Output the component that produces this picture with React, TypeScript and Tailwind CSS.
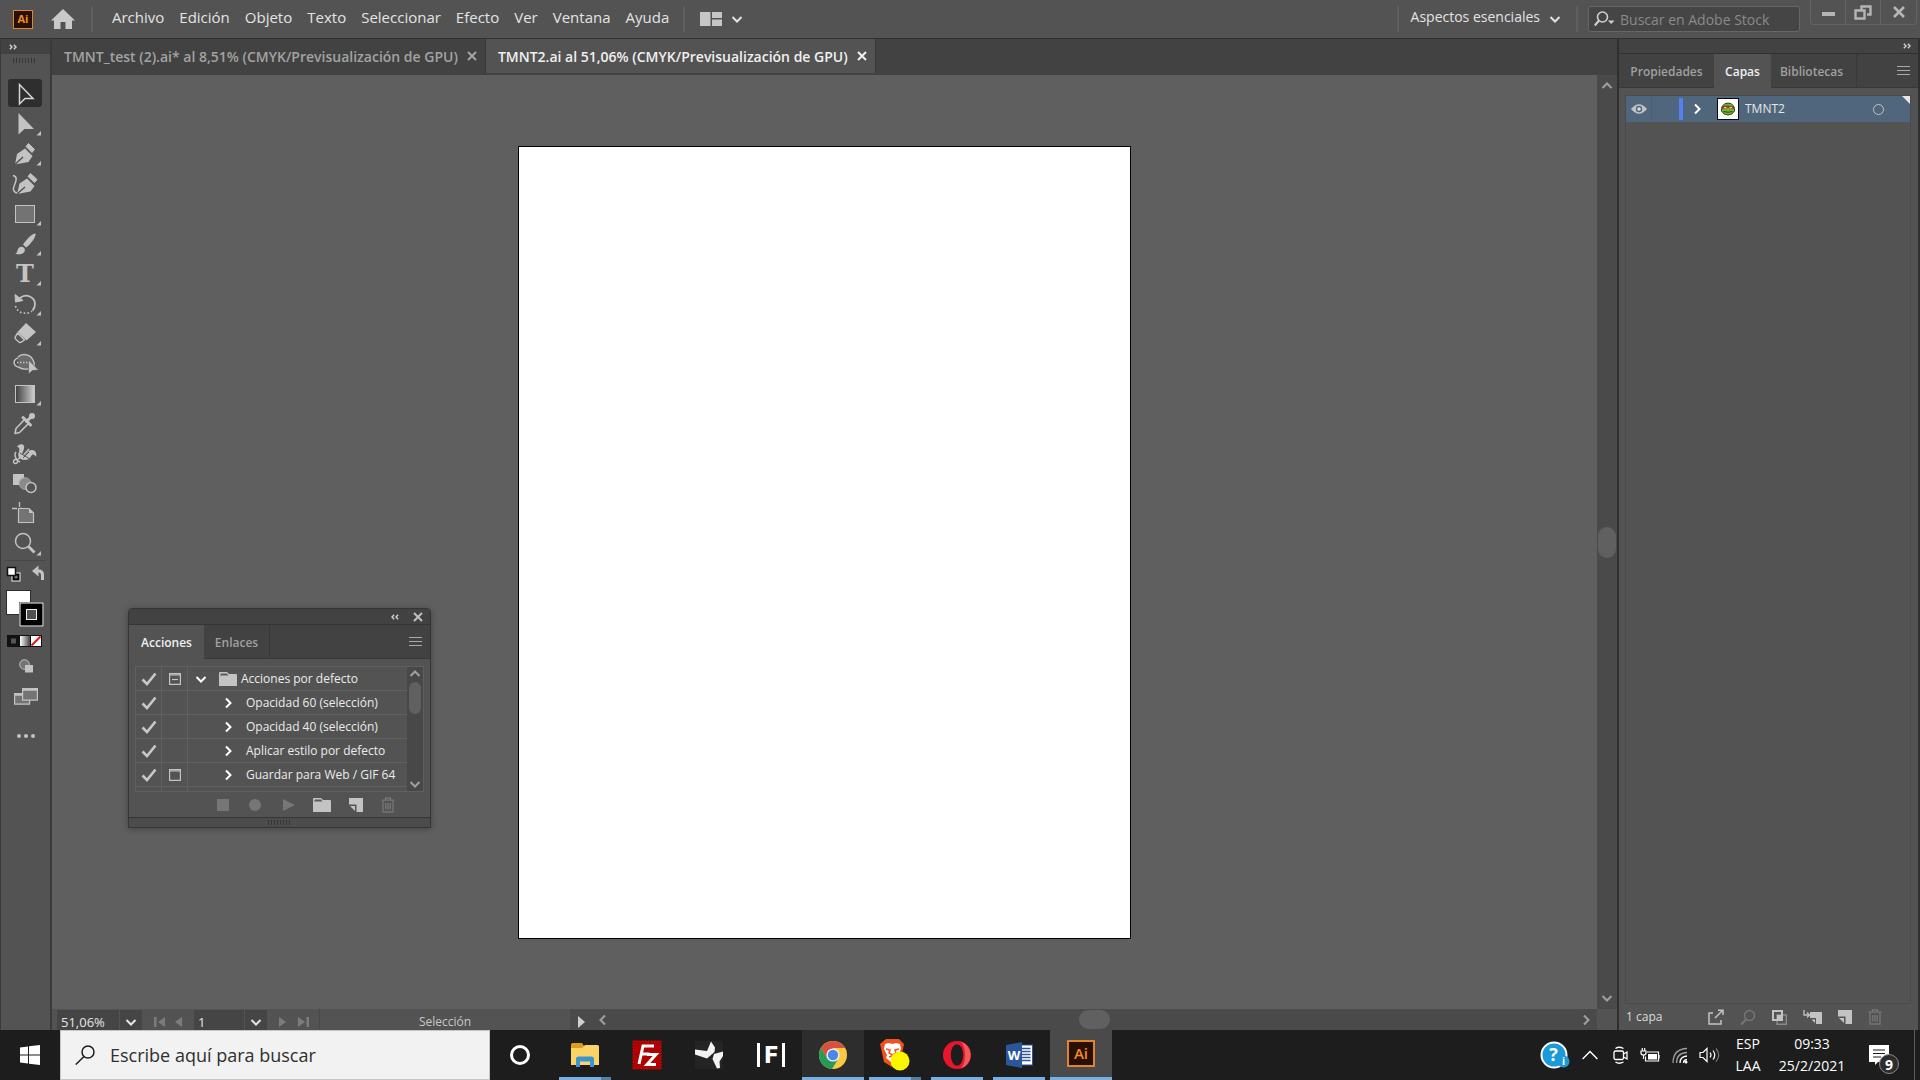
import { useState } from 'react'
import type { ReactNode } from 'react'

const MENUS = ['Archivo', 'Edición', 'Objeto', 'Texto', 'Seleccionar', 'Efecto', 'Ver', 'Ventana', 'Ayuda']

const DOCS = [
  { id: 'test', title: 'TMNT_test (2).ai* al 8,51% (CMYK/Previsualización de GPU)' },
  { id: 'tmnt2', title: 'TMNT2.ai al 51,06% (CMYK/Previsualización de GPU)' },
]

// ── Tools ──────────────────────────────
interface Tool {
  name: string
  more?: boolean
  icon: ReactNode
}

const C = '#c3c3c3'
const BG = '#535353'

const TOOLS: Tool[] = [
  { name: 'Selección', icon: <path d="M19.5 6.5V26l5.5-5.5h8z" fill="none" stroke="#d6d6d6" strokeWidth="1.5" /> },
  { name: 'Selección directa', more: true, icon: <path d="M18.500 5V26.500L24.500 21H34z" fill={C} /> },
  {
    name: 'Pluma', more: true,
    icon: (
      <>
        <path d="M15 26.500 17 16 25 10.500 32.500 18 28.500 24z" fill={C} />
        <path d="M26 8.500 28.500 5.500 34.500 11.500 32 14.500z" fill={C} stroke={C} strokeLinejoin="round" />
        <path d="M15 26.500 23 19" stroke={BG} strokeWidth="1.5" />
      </>
    ),
  },
  {
    name: 'Curvatura',
    icon: (
      <>
        <path d="M17 26 19.500 15.500 27 10.500 34.500 18 30.500 23.500z" fill={C} />
        <path d="M28 8.500 30.500 5.500 37 11.500 34.500 14.500z" fill={C} stroke={C} strokeLinejoin="round" />
        <path d="M17 26 25 19" stroke={BG} strokeWidth="1.5" />
        <path d="M13 7.500c5 1 3 6 1.500 9.500s-2 7 2.500 8" fill="none" stroke={C} strokeWidth="1.500" />
      </>
    ),
  },
  { name: 'Rectángulo', more: true, icon: <rect x="15.500" y="7.500" width="19" height="17" fill="#737373" stroke={C} /> },
  {
    name: 'Pincel', more: true,
    icon: (
      <>
        <path d="M35.500 5.500c1 3-5 11-9.500 14l-3-3C26 12 32 5.500 35.500 5.500z" fill={C} />
        <path d="M15 25.500c2 0 2-2 3-4.500 1.500-3 5-3 6.500-.5 1 2 0 4-2 5-2.500 1.200-6 1-7.500 0z" fill={C} />
      </>
    ),
  },
  {
    name: 'Texto', more: true,
    icon: <text x="25" y="24" textAnchor="middle" fontSize="24" fontWeight="700" fill={C} className="font-['DejaVu_Serif',serif]">T</text>,
  },
  {
    name: 'Rotar', more: true,
    icon: (
      <>
        <path d="M20 10c6-5 15-1 15 6 0 3-1 5-2.500 6.500" fill="none" stroke={C} strokeWidth="1.800" />
        <path d="M15 6.500 15.500 14 23 12.500z" fill={C} stroke={C} />
        <path d="M15.500 18c2 8 12 9 16.500 5" fill="none" stroke={C} strokeWidth="1.600" strokeDasharray="1.600 2.200" />
      </>
    ),
  },
  {
    name: 'Borrador', more: true,
    icon: (
      <>
        <path d="M26 5 36 14 26.500 22.500 17.500 14z" fill={C} />
        <path d="M17.500 15 15 19.500Q15 21 19.500 24.500 20.500 25 24.500 22z" fill="none" stroke={C} strokeWidth="1.500" strokeLinejoin="round" />
      </>
    ),
  },
  {
    name: 'Creador de formas',
    icon: (
      <>
        <ellipse cx="20.500" cy="14.500" rx="6.500" ry="5" fill="none" stroke={C} strokeWidth="1.400" />
        <path d="M18 9c4-4 12-3 15 3s0 9-3 9-9 1-11-2" fill="#6b6b6b" stroke={C} strokeWidth="1.400" />
        <path d="M17 14.500h13" stroke={C} strokeWidth="1.500" strokeDasharray="1.500 1.500" />
        <path d="M28.500 12V26l4-3.500 6-.5z" fill={C} stroke={BG} strokeWidth=".6" />
      </>
    ),
  },
  {
    name: 'Degradado', more: true,
    icon: (
      <>
        <defs>
          <linearGradient id="grad-tool"><stop stopColor="#3f3f3f" /><stop offset="1" stopColor="#d0d0d0" /></linearGradient>
        </defs>
        <rect x="15.500" y="7.500" width="19" height="17" fill="url(#grad-tool)" stroke={C} />
      </>
    ),
  },
  {
    name: 'Cuentagotas',
    icon: (
      <>
        <path d="M24.500 11.500 16 20.500 15 25.500 19.500 24.500 28.500 15.500" fill="none" stroke={C} strokeWidth="1.600" strokeLinejoin="round" />
        <path d="M23 9.500 30.500 17M26.500 13.500 32 8" stroke={C} strokeWidth="3" strokeLinecap="round" />
        <circle cx="32" cy="8" r="3" fill={C} />
      </>
    ),
  },
  {
    name: 'Deformación de posición libre',
    icon: (
      <>
        <path d="M17 9c1-3 6-4 7-1 1 4-3 7-1 9 3 2 5-6 9-5 4 0 5 4 4 7-1-2-3-3-4-2-2 2-2 5-7 5-6 0-8-4-6-8 1-3 0-5-2-5z" fill={C} />
        <path d="M16.500 22.500 24.500 16 29 11M16 14c-2 2-1 8 4 10" fill="none" stroke={C} strokeWidth="1.400" />
        <path d="M20 15l10 6M23 20l6-6" stroke={BG} />
        <circle cx="15.500" cy="23.500" r="2" fill={BG} stroke={C} strokeWidth="1.300" />
      </>
    ),
  },
  {
    name: 'Fusión',
    icon: (
      <>
        <rect x="13" y="6" width="11" height="11" fill={C} />
        <circle cx="25" cy="15.500" r="5.800" fill="#8a8a8a" stroke="#a6a6a6" />
        <circle cx="31" cy="19.500" r="5" fill={BG} stroke={C} strokeWidth="1.500" />
      </>
    ),
  },
  {
    name: 'Mesa de trabajo',
    icon: (
      <>
        <path d="M12 10.500h5M20 10.500h2M19.500 4v5M19.500 12v2" stroke={C} strokeWidth="1.300" />
        <path d="M18.500 10.500H29L33.500 15V24.500H18.500z" fill="#747474" stroke={C} strokeWidth="1.200" />
        <path d="M29 10.500V15h4.500z" fill={C} />
      </>
    ),
  },
  {
    name: 'Zoom', more: true,
    icon: (
      <>
        <circle cx="23" cy="13" r="7.500" fill="none" stroke={C} strokeWidth="1.500" />
        <path d="m28.500 18.500 6 6" stroke={C} strokeWidth="2.800" />
      </>
    ),
  },
]

function ToolIcon({ tool }: { tool: Tool }) {
  return (
    <svg viewBox="0 0 50 30" className="h-[30px] w-[50px] shrink-0" aria-hidden>
      {tool.icon}
      {tool.more && <path d="M41 23v4.500h-4.500z" fill={C} />}
    </svg>
  )
}

// ── Small glyphs ──────────────────────────────
function Chevron({ dir, className = '' }: { dir: 'up' | 'down' | 'left' | 'right'; className?: string }) {
  const d = {
    up: 'M1.500 8 6 3.500 10.500 8',
    down: 'M1.500 4 6 8.500 10.500 4',
    left: 'M8 1.500 3.500 6 8 10.500',
    right: 'M4 1.500 8.500 6 4 10.500',
  }[dir]
  return (
    <svg viewBox="0 0 12 12" className={`h-3 w-3 shrink-0 ${className}`} fill="none" stroke="currentColor" strokeWidth="2" aria-hidden>
      <path d={d} />
    </svg>
  )
}

function DoubleChevron({ flip = false }: { flip?: boolean }) {
  return (
    <svg viewBox="0 0 8 6" className={`h-[6px] w-2 text-[#d0d0d0] ${flip ? 'rotate-180' : ''}`} fill="none" stroke="currentColor" strokeWidth="1.400" aria-hidden>
      <path d="m.8.8 2.200 2.200L.8 5.200M4.800.8 7 3 4.800 5.200" />
    </svg>
  )
}

function Cross({ className = '' }: { className?: string }) {
  return (
    <svg viewBox="0 0 10 10" className={`h-[10px] w-[10px] ${className}`} stroke="currentColor" strokeWidth="2" aria-hidden>
      <path d="m1 1 8 8M9 1 1 9" />
    </svg>
  )
}

function Hamburger() {
  return (
    <svg viewBox="0 0 13 9" className="h-[9px] w-[13px] text-[#a8a8a8]" stroke="currentColor" aria-hidden>
      <path d="M0 .5h13M0 4.500h13M0 8.500h13" />
    </svg>
  )
}

function Folder() {
  return (
    <svg viewBox="0 0 18 14" className="h-[14px] w-[18px] shrink-0" fill={C} aria-hidden>
      <path d="M0 1q0-1 1-1h7l2 2h7q1 0 1 1v11H0z" />
      <path d="M1 3.500h8.500L8 1.500H2z" fill="#5a5a5a" />
    </svg>
  )
}

function NewPage() {
  return (
    <svg viewBox="0 0 14 14" className="h-[14px] w-[14px] shrink-0" fill={C} aria-hidden>
      <path d="M0 0h14v14H7.500V6.500H0z" />
      <path d="M1 8h5v5z" />
    </svg>
  )
}

function Trash() {
  return (
    <svg viewBox="0 0 14 16" className="h-4 w-[14px] shrink-0 text-[#767676]" fill="none" stroke="currentColor" strokeWidth="1.300" aria-hidden>
      <path d="M.5 3.200h13M4.500 3V1h5v2M2 3.500V15h10V3.500M4.800 6v6.500M7 6v6.500M9.200 6v6.500" />
    </svg>
  )
}

function AiLogo({ className }: { className: string }) {
  return (
    <span className={`flex items-center justify-center border-[#e0852c] bg-[#2a0f04] text-[#f08c22] ${className}`}>Ai</span>
  )
}

// ── Menu bar ──────────────────────────────
function MenuBar() {
  return (
    <header className="flex h-[39px] shrink-0 items-center border-b border-[#303030] bg-[#535353] text-[#e3e3e3]">
      <AiLogo className="ml-[13px] h-[19px] w-5 border text-[11px] font-bold" />
      <button type="button" aria-label="Inicio" className="ml-[18px]">
        <svg viewBox="0 0 24 20" className="h-5 w-6" fill="#c9c9c9">
          <path d="M12 0 0 11.500h3V20h6.500v-7h5v7H21v-8.500h3z" />
        </svg>
      </button>
      <span className="ml-4 h-[26px] w-0.5 bg-[#5e5e5e]" />
      <nav className="ml-[19px] flex gap-[15px] text-[15px] leading-5">
        {MENUS.map((m) => (
          <button key={m} type="button" className="pb-1">{m}</button>
        ))}
      </nav>
      <span className="ml-[14px] h-[26px] w-0.5 bg-[#5e5e5e]" />
      <button type="button" aria-label="Organizar documentos" className="ml-[15px] flex items-center gap-[9px]">
        <svg viewBox="0 0 22 14" className="h-[14px] w-[22px]" fill="#c6c6c6">
          <path d="M0 0h10.500v14H0zM12 0h10v6H12zM12 7.500h10V14H12z" />
        </svg>
        <Chevron dir="down" />
      </button>

      <div className="ml-auto flex h-full items-center">
        <span className="h-[26px] w-0.5 bg-[#5e5e5e]" />
        <button type="button" className="ml-3 flex items-center gap-[9px] text-[14px] leading-5">
          <span className="pb-1">Aspectos esenciales</span>
          <Chevron dir="down" />
        </button>
        <span className="ml-[15px] h-[26px] w-0.5 bg-[#5e5e5e]" />
        <label className="ml-[10px] flex h-[26px] w-[212px] items-center gap-[5px] rounded-[3px] border border-[#666] bg-[#454545] pl-[5px]">
          <svg viewBox="0 0 21 16" className="h-4 w-[21px] shrink-0" fill="none" stroke="#d0d0d0" strokeWidth="1.600">
            <circle cx="8.500" cy="6" r="5" />
            <path d="M5 9.500.8 14.500" strokeWidth="2" />
            <path d="M14 9.500h6.500L17.200 13z" fill="#d0d0d0" stroke="none" />
          </svg>
          <input type="text" aria-label="Buscar en Adobe Stock" placeholder="Buscar en Adobe Stock" className="w-full min-w-0 bg-transparent text-[14px] outline-none placeholder:text-[#8a8a8a]" />
        </label>
        <div className="mr-[3px] ml-[10px] flex h-[25px] self-start rounded-b-[4px] border border-t-0 border-[#646464] text-[#b5b5b5]">
          <button type="button" aria-label="Minimizar" className="flex w-[35px] items-center justify-center border-r border-[#646464]">
            <span className="mt-1 h-1 w-[13px] bg-[#b5b5b5]" />
          </button>
          <button type="button" aria-label="Restaurar" className="flex w-[35px] items-center justify-center border-r border-[#646464]">
            <svg viewBox="0 0 18 15" className="h-[15px] w-[18px]" fill="none" stroke="currentColor" strokeWidth="2.400">
              <path d="M7.500 5V1.500h9v8H13M1.500 5.500h9v8h-9z" />
            </svg>
          </button>
          <button type="button" aria-label="Cerrar" className="flex w-[35px] items-center justify-center">
            <svg viewBox="0 0 12 12" className="h-3 w-3" stroke="currentColor" strokeWidth="2.600"><path d="m1 1 10 10M11 1 1 11" /></svg>
          </button>
        </div>
      </div>
    </header>
  )
}

// ── Toolbar ──────────────────────────────
function Toolbar() {
  const [active, setActive] = useState('Selección')

  return (
    <aside className="flex w-[52px] shrink-0 flex-col border-r-2 border-l border-[#3a3a3a] bg-[#535353]">
      <div className="flex h-[15px] shrink-0 items-center bg-[#424242] pl-2"><DoubleChevron /></div>
      <svg viewBox="0 0 24 5" className="mt-1 mb-[15px] ml-3 h-[5px] w-6 shrink-0" stroke="#363636"><path d="M.5 0v5M3.500 0v5M6.500 0v5M9.500 0v5M12.500 0v5M15.500 0v5M18.500 0v5M21.500 0v5" /></svg>
      {TOOLS.map((t) => (
        <button key={t.name} type="button" aria-label={t.name} onClick={() => setActive(t.name)} className="relative -ml-px flex h-[30px] shrink-0 items-center">
          {active === t.name && <span className="absolute inset-y-px right-2 left-2 rounded-[3px] bg-[#2e2e2e]" />}
          <span className="relative"><ToolIcon tool={t} /></span>
        </button>
      ))}
      <hr className="mx-1 mt-[2px] border-[#484848]" />
      <svg viewBox="0 0 50 88" className="mt-[3px] -ml-px h-[88px] w-[50px] shrink-0" aria-hidden>
        {/* default colours and swap */}
        <rect x="12" y="9" width="8" height="8" fill="#000" stroke="#d5d5d5" strokeWidth="1.200" />
        <rect x="14.500" y="11.500" width="3" height="3" fill="#777" />
        <rect x="7.500" y="3.500" width="8" height="8" fill="#fff" stroke="#111" strokeWidth="1.500" />
        <path d="M36 7h3q3.500 0 3.500 4v5" fill="none" stroke={C} strokeWidth="3" />
        <path d="M32 7 38.500 1.500v11z" fill={C} />
        {/* fill and stroke */}
        <rect x="6.500" y="26.500" width="24" height="24" fill="#fff" stroke="#2c2c2c" />
        <rect x="19" y="38" width="25" height="25" fill="#2a2a2a" />
        <rect x="20" y="39" width="23" height="23" fill="#000" stroke="#fff" />
        <rect x="26.500" y="45.500" width="10" height="10" fill="#4f4f4f" stroke="#eee" />
        <defs>
          <linearGradient id="grad-mini"><stop stopColor="#fff" /><stop offset="1" stopColor="#444" /></linearGradient>
        </defs>
        <rect x="7" y="71" width="35" height="12" fill="#111" />
        <rect x="11" y="74.500" width="5" height="5" fill="#555" />
        <rect x="20" y="72" width="10" height="10" fill="url(#grad-mini)" />
        <rect x="31" y="72" width="10" height="10" fill="#fff" />
        <path d="M31.500 81.500 40.500 72.500" stroke="#e31c1c" strokeWidth="2.200" />
      </svg>
      <button type="button" aria-label="Modo de dibujo" className="mt-[2px] flex h-6 shrink-0 items-center justify-center">
        <svg viewBox="0 0 14 14" className="h-[14px] w-[14px]"><circle cx="5.500" cy="5.500" r="4.800" fill="#747474" stroke={C} /><rect x="6" y="6" width="8" height="7.500" fill={C} /></svg>
      </button>
      <button type="button" aria-label="Modo de pantalla" className="mt-[6px] flex h-6 shrink-0 items-center justify-center">
        <svg viewBox="0 0 24 17" className="h-[17px] w-6" fill="#747474" stroke={C} strokeWidth="1.200"><path d="M.6 5.600h15v10.500H.6z" /><path d="M.6 6.500h15" strokeWidth="2.500" /><path d="M8.600.6h14.800v11.500H8.600z" /><path d="M8.600 1.500h14.800" strokeWidth="2.500" /></svg>
      </button>
      <button type="button" aria-label="Editar barra de herramientas" className="mt-4 flex h-6 shrink-0 items-center justify-center">
        <svg viewBox="0 0 18 4" className="h-1 w-[18px]" fill={C}><circle cx="2" cy="2" r="2" /><circle cx="9" cy="2" r="2" /><circle cx="16" cy="2" r="2" /></svg>
      </button>
    </aside>
  )
}

// ── Document tabs ──────────────────────────────
function DocumentTabs() {
  const [current, setCurrent] = useState('tmnt2')

  return (
    <div className="flex h-9 shrink-0 border-b-2 border-[#424242] bg-[#424242]">
      {DOCS.map((d) => (
        <div
          key={d.id}
          className={[
            'flex items-center gap-[9px] border-r border-[#383838] pr-2 pl-3 font-semibold',
            current === d.id ? 'bg-[#535353] text-[#f0f0f0]' : 'text-[#a3a3a3]',
          ].join(' ')}
        >
          <button type="button" onClick={() => setCurrent(d.id)} className="pt-0.5 text-[14px] leading-5 whitespace-nowrap">{d.title}</button>
          <button type="button" aria-label="Cerrar documento"><Cross className="h-[9px] w-[9px]" /></button>
        </div>
      ))}
    </div>
  )
}

// ── Actions window ──────────────────────────────
interface ActionRow {
  name: string
  dialog?: 'mixed' | 'on'
  folder?: boolean
}

const ACTIONS: ActionRow[] = [
  { name: 'Acciones por defecto', dialog: 'mixed', folder: true },
  { name: 'Opacidad 60 (selección)' },
  { name: 'Opacidad 40 (selección)' },
  { name: 'Aplicar estilo por defecto' },
  { name: 'Guardar para Web / GIF 64', dialog: 'on' },
]

function ActionsPanel() {
  return (
    <section className="absolute top-[533px] left-[76px] flex w-[303px] flex-col rounded-t-[4px] border border-[#353535] bg-[#535353] shadow-[0_1px_6px_rgba(0,0,0,0.3)]">
      <div className="flex h-4 items-center justify-end gap-[14px] rounded-t-[3px] border-b border-[#353535] bg-[#424242] pr-[7px]">
        <DoubleChevron flip />
        <button type="button" aria-label="Cerrar panel"><Cross className="h-[9px] w-[9px] text-[#c0c0c0]" /></button>
      </div>
      <div className="flex h-[34px] items-stretch bg-[#424242] text-[12px] font-semibold">
        <button type="button" className="w-[75px] bg-[#535353] pt-0.5 text-[#f0f0f0]">Acciones</button>
        <button type="button" className="w-[66px] border-r border-b border-[#383838] pt-0.5 text-[#a0a0a0]">Enlaces</button>
        <div className="flex flex-1 items-center justify-end border-b border-[#383838] pr-2"><Hamburger /></div>
      </div>
      <div className="mx-[6px] mt-[7px] flex h-[126px] border border-[#5f5f5f]">
        <ul className="flex-1 overflow-hidden text-[12px] text-[#ececec]">
          {ACTIONS.map((a) => (
            <li key={a.name} className="flex h-6 items-stretch border-b border-[#606060]">
              <label className="grid w-[26px] shrink-0 place-items-center border-r border-[#606060] *:[grid-area:1/1]">
                <input type="checkbox" defaultChecked aria-label={a.name} className="peer h-[14px] w-[14px] appearance-none" />
                <svg viewBox="0 0 16 14" className="pointer-events-none invisible h-[14px] w-4 peer-checked:visible" fill="none" stroke="#c8c8c8" strokeWidth="2.600"><path d="M1.500 7.500 6 12 14.500 1.500" /></svg>
              </label>
              <span className="flex w-[26px] shrink-0 items-center justify-center border-r border-[#606060]">
                {a.dialog && (
                  <svg viewBox="0 0 12 12" className="h-3 w-3" fill="none" stroke={C} strokeWidth="1.200">
                    <path d="M.6.6h10.800v10.800H.6zM.6 2h10.800" />
                    {a.dialog === 'mixed' && <path d="M3 6.500h6" />}
                  </svg>
                )}
              </span>
              {a.folder ? (
                <span className="flex items-center pl-[7px]">
                  <Chevron dir="down" className="mr-3 text-white" />
                  <Folder />
                  <span className="ml-1 whitespace-nowrap">{a.name}</span>
                </span>
              ) : (
                <span className="flex items-center pl-[34px]">
                  <Chevron dir="right" className="mr-3 text-white" />
                  <span className="whitespace-nowrap">{a.name}</span>
                </span>
              )}
            </li>
          ))}
          <li className="flex h-6" aria-hidden>
            <span className="w-[26px] border-r border-[#606060]" />
            <span className="w-[26px] border-r border-[#606060]" />
          </li>
        </ul>
        <div className="flex w-4 flex-col items-center bg-[#484848] py-px text-[#a0a0a0]">
          <Chevron dir="up" />
          <span className="mt-[2px] h-8 w-3 rounded-full bg-[#606060]" />
          <Chevron dir="down" className="mt-auto" />
        </div>
      </div>
      <div className="flex h-[25px] items-center justify-end gap-[18px] pr-[35px] text-[#767676]">
        <span className="h-3 w-3 bg-current" />
        <span className="ml-0.5 h-3 w-3 rounded-full bg-current" />
        <svg viewBox="0 0 12 12" className="ml-1 h-3 w-3" fill="currentColor"><path d="M0 0v12l12-6z" /></svg>
        <Folder />
        <NewPage />
        <Trash />
      </div>
      <div className="flex h-[10px] items-center justify-center border-t border-[#353535] bg-[#4c4c4c]">
        <svg viewBox="0 0 24 5" className="h-[5px] w-6" stroke="#363636"><path d="M.5 0v5M3.500 0v5M6.500 0v5M9.500 0v5M12.500 0v5M15.500 0v5M18.500 0v5M21.500 0v5" /></svg>
      </div>
    </section>
  )
}

// ── Status bar ──────────────────────────────
function StatusBar() {
  return (
    <div className="flex h-[21px] shrink-0 items-start overflow-hidden bg-[#535353] text-[13px] text-[#e6e6e6]">
      <input type="text" aria-label="Nivel de zoom" defaultValue="51,06%" className="mt-px ml-[5px] h-6 w-[62px] shrink-0 bg-[#454545] pl-1 outline-none" />
      <button type="button" aria-label="Niveles de zoom" className="mt-px ml-px flex h-6 w-[22px] shrink-0 items-center justify-center bg-[#454545]"><Chevron dir="down" /></button>
      <div className="flex h-[26px] w-[52px] shrink-0 items-center gap-[10px] pl-3 text-[#7c7c7c]">
        <svg viewBox="0 0 11 10" className="h-[10px] w-[11px]" fill="currentColor"><path d="M0 0h2.500v10H0zM11 0v10L4 5z" /></svg>
        <svg viewBox="0 0 7 10" className="h-[10px] w-[7px]" fill="currentColor"><path d="M7 0v10L0 5z" /></svg>
      </div>
      <input type="text" aria-label="Mesa de trabajo" defaultValue="1" className="mt-px h-6 w-[50px] shrink-0 bg-[#454545] pl-1 outline-none" />
      <button type="button" aria-label="Mesas de trabajo" className="mt-px ml-px flex h-6 w-[22px] shrink-0 items-center justify-center bg-[#454545]"><Chevron dir="down" /></button>
      <div className="flex h-[26px] w-[53px] shrink-0 items-center gap-3 border-r border-[#484848] pl-3 text-[#7c7c7c]">
        <svg viewBox="0 0 7 10" className="h-[10px] w-[7px]" fill="currentColor"><path d="M0 0v10l7-5z" /></svg>
        <svg viewBox="0 0 11 10" className="h-[10px] w-[11px]" fill="currentColor"><path d="M8.500 0H11v10H8.500zM0 0v10l7-5z" /></svg>
      </div>
      <div className="flex h-[26px] w-[250px] shrink-0 items-center justify-center text-[12px] text-[#c8c8c8]">Selección</div>
      <button type="button" aria-label="Mostrar" className="flex h-[26px] w-[22px] shrink-0 items-center justify-center bg-[#4a4a4a]">
        <svg viewBox="0 0 7 12" className="h-3 w-[7px]" fill="#d0d0d0"><path d="M0 0v12l7-6z" /></svg>
      </button>
      <div className="relative flex h-full flex-1 items-center justify-between bg-[#4a4a4a] px-[5px] text-[#a0a0a0]">
        <Chevron dir="left" />
        <span className="absolute left-[48.500%] h-[19px] w-[31px] rounded-full bg-[#606060]" />
        <Chevron dir="right" />
      </div>
      <span className="h-full w-5 shrink-0 bg-[#535353]" />
    </div>
  )
}

// ── Layers panel ──────────────────────────────
function LayersPanel() {
  return (
    <aside className="flex w-[303px] shrink-0 flex-col border-r-2 border-l-2 border-[#2f2f2f] bg-[#535353]">
      <div className="flex h-[15px] shrink-0 items-center justify-end border-b border-[#303030] bg-[#424242] pr-[7px]"><DoubleChevron /></div>
      <div className="flex h-[34px] shrink-0 bg-[#424242] text-[12px] font-semibold text-[#a0a0a0]">
        <button type="button" className="w-[95px] border-b border-[#383838] pt-0.5">Propiedades</button>
        <button type="button" className="w-[57px] bg-[#535353] pt-0.5 text-[#f0f0f0]">Capas</button>
        <button type="button" className="w-[86px] border-r border-b border-[#383838] pt-0.5 pr-1">Bibliotecas</button>
        <div className="flex flex-1 items-center justify-end border-b border-[#383838] pr-2"><Hamburger /></div>
      </div>
      <div className="mr-[7px] ml-[6px] mt-[7px] flex flex-1 flex-col border border-[#4b4b4b]">
        <div className="relative flex h-[26px] items-center bg-[#50667c] text-[12px] text-[#e6e6e6]">
          <button type="button" aria-label="Visibilidad" className="flex h-full w-[26px] items-center justify-center border-r border-[#4a5f74]">
            <svg viewBox="0 0 16 10" className="h-[10px] w-4"><path d="M0 5Q8-4.500 16 5 8 14.500 0 5z" fill={C} /><circle cx="8" cy="5" r="3.200" fill="#50667c" /><circle cx="8" cy="5" r="1.800" fill="#dadada" /></svg>
          </button>
          <span className="ml-[27px] h-[22px] w-1 bg-[#5580f5]" />
          <Chevron dir="right" className="ml-2 text-white" />
          <svg viewBox="0 0 22 22" className="ml-[14px] h-[22px] w-[22px]">
            <rect x=".5" y=".5" width="21" height="21" fill="#fff" stroke="#0a0a0a" />
            <path d="M5.500 8Q7 5 11 5t5.500 3q1.500 2.500 1 5-2 4-6.500 4t-6.500-4q-.5-2.500 1-5z" fill="#78b030" stroke="#2a4a1c" />
            <path d="M4.500 9Q6.500 7 11 7.500T17.500 9l-.5 2q-6-2-12 0z" fill="#8c3b2c" />
            <path d="M7 9.500h2.500M12.500 9.500H15" stroke="#f4f4f4" strokeWidth=".8" />
            <path d="M6.500 13.500q4.500 1.500 9 0" fill="none" stroke="#2a4a1c" />
          </svg>
          <span className="ml-[6px]">TMNT2</span>
          <span className="mr-[26px] ml-auto h-[11px] w-[11px] rounded-full border-[1.5px] border-[#c3c3c3]" />
          <svg viewBox="0 0 8 8" className="absolute top-0 right-0 h-2 w-2" fill="#e6e6e6"><path d="M0 0h8v8z" /></svg>
        </div>
      </div>
      <div className="flex h-[26px] shrink-0 items-center gap-4 pr-9 pl-[7px] text-[12px] text-[#dcdcdc]">
        <span className="mr-auto">1 capa</span>
        <svg viewBox="0 0 16 16" className="h-4 w-4" fill="none" stroke={C} strokeWidth="1.500"><path d="M5 4H1v11h12v-4M7 9l7.500-7.500M10 1.200h5V6" /></svg>
        <svg viewBox="0 0 16 16" className="h-4 w-4" fill="none" stroke="#767676" strokeWidth="1.400"><circle cx="9.500" cy="6.500" r="5" /><path d="M6 10.500 1 15.500" strokeWidth="2.200" /></svg>
        <svg viewBox="0 0 15 15" className="h-[15px] w-[15px]" fill="none"><path d="M5 5h9.300v9.300H5z" stroke="#8a8a8a" strokeWidth="1.400" /><path d="M1 1h9v9H1z" stroke={C} strokeWidth="2" /><path d="M5 5h5v5H5z" fill={C} /></svg>
        <svg viewBox="0 0 19 14" className="h-[14px] w-[19px]" fill={C}><path d="M7 2h12v12h-6V8H7zM8.500 9.500h3.500V13z" /><path d="M1 0v5h5M4 2.500 6.500 5 4 7.500" fill="none" stroke={C} strokeWidth="1.300" /></svg>
        <NewPage />
        <Trash />
      </div>
    </aside>
  )
}

// ── Taskbar ──────────────────────────────
interface TaskApp {
  name: string
  cell?: string
  bar?: 'full' | 'single' | 'stack'
  icon: ReactNode
}

const APPS: TaskApp[] = [
  {
    name: 'Explorador de archivos', bar: 'stack',
    icon: (
      <svg viewBox="0 0 28 24" className="h-6 w-7">
        <path d="M0 1.500Q0 0 1.500 0H11l2 3v4H0z" fill="#dd9d1c" />
        <path d="M0 5h11l3-3h12.500Q28 2 28 3.500V22H0z" fill="#fbd467" />
        <path d="M5 24v-8q0-2.500 2.500-2.500h13q2.500 0 2.500 2.500v8h-4v-5.500H9V24z" fill="#3c94d0" />
      </svg>
    ),
  },
  {
    name: 'FileZilla',
    icon: (
      <svg viewBox="0 0 30 30" className="h-[30px] w-[30px]">
        <rect x="1" y="1" width="28" height="28" fill="#b00000" stroke="#c40a0a" strokeDasharray="2 1" />
        <path d="M7 24 11 6H22M9.500 14h8M15 14.500h9L15 24.500h9" fill="none" stroke="#fff" strokeWidth="3" />
      </svg>
    ),
  },
  {
    name: 'ZBrush',
    icon: (
      <svg viewBox="0 0 28 28" className="h-7 w-7">
        <rect width="28" height="28" fill="#242424" />
        <path d="M0 8.500 12 10 16 .5 20 6.500 19.500 11 12 17.500 0 13.500z" fill="#f2f2f2" />
        <path d="M28 10.500 19 13 17.500 18 22 27.500 25 27 24.500 20.500 28 15z" fill="#f2f2f2" />
      </svg>
    ),
  },
  {
    name: 'FontForge',
    icon: (
      <span className="flex h-6 w-7 items-center justify-between">
        <span className="h-6 w-[3px] bg-white" />
        <span className="text-[24px] leading-6 font-black text-white font-['Roboto',sans-serif]">F</span>
        <span className="h-6 w-[3px] bg-white" />
      </span>
    ),
  },
  {
    name: 'Chrome', bar: 'full', cell: 'bg-[#2d2d2d]',
    icon: (
      <svg viewBox="0 0 28 28" className="h-7 w-7">
        <circle cx="14" cy="14" r="14" fill="#fbc943" />
        <path d="M14 7h12.100A14 14 0 0 0 1.900 7L8 17z" fill="#d8503f" />
        <path d="M1.900 7A14 14 0 0 0 13 28l6.500-10.500L14 20 8 17z" fill="#279a57" />
        <circle cx="14" cy="14" r="6.600" fill="#f1f1f1" />
        <circle cx="14" cy="14" r="5.200" fill="#4b87ea" />
      </svg>
    ),
  },
  {
    name: 'Brave', bar: 'stack',
    icon: (
      <svg viewBox="0 0 30 32" className="h-8 w-[30px]">
        <path d="M6 0h13l5 5-1 5-3 13-8 5-8-5L1 9 0 5z" fill="#f1501f" />
        <path d="m5 5 4-1 3.500 1L16 4l4 1 1 5-3 6 1 3-6.500 5L6 19l1-3-3-6z" fill="#fff" />
        <path d="m6 10 4 1-1 3 3.500 2 3.500-2-1-3 4-1M9 18l3.500-1.500L16 18" fill="none" stroke="#f1501f" strokeWidth="1.500" />
        <circle cx="20" cy="22" r="9.500" fill="#faf600" />
      </svg>
    ),
  },
  {
    name: 'Opera', bar: 'single',
    icon: (
      <svg viewBox="0 0 28 28" className="h-7 w-7">
        <circle cx="14" cy="14" r="14" fill="#e8152c" />
        <path d="M17 .4a14 14 0 0 1 0 27.200q5-3 5-13.600T17 .4z" fill="#f2575b" />
        <ellipse cx="14" cy="14" rx="6.200" ry="10.800" fill="#1d1d1d" />
      </svg>
    ),
  },
  {
    name: 'Word', bar: 'single',
    icon: (
      <svg viewBox="0 0 27 26" className="h-[26px] w-[27px]">
        <rect x="14" y="3" width="12.500" height="20" fill="#fff" stroke="#2b579a" />
        <path d="M16 6.500h8.500M16 9.500h8.500M16 12.500h8.500M16 15.500h8.500M16 18.500h8.500" stroke="#2b579a" strokeWidth="1.400" />
        <path d="M0 3 16 0v26L0 23z" fill="#2b579a" />
        <text x="8" y="18" textAnchor="middle" fontSize="13" fontWeight="700" fill="#fff">W</text>
      </svg>
    ),
  },
  { name: 'Illustrator', bar: 'full', cell: 'bg-[#4a4a4a] pb-[3px]', icon: <AiLogo className="h-[27px] w-7 border-2 text-[15px] font-semibold" /> },
]

function Taskbar() {
  return (
    <footer className="flex h-[50px] shrink-0 items-stretch bg-[#1d1d1d] text-white">
      <button type="button" aria-label="Inicio" className="flex w-[60px] items-center justify-center">
        <svg viewBox="0 0 20 20" className="h-5 w-5" fill="#fff"><path d="M0 2.500 8 1.400v8.100H0zM9 1.200 20 0v9.500H9zM0 10.500h8v8.100l-8-1.100zM9 10.500h11V20L9 18.800z" /></svg>
      </button>
      <label className="flex w-[430px] items-center gap-[15px] border border-[#c5c5c5] bg-[#f2f2f2] pl-[14px]">
        <svg viewBox="0 0 20 20" className="h-5 w-5 shrink-0" fill="none" stroke="#1d1d1d" strokeWidth="1.500"><circle cx="13" cy="7" r="6" /><path d="M9 11.500.8 19.500" /></svg>
        <input type="text" aria-label="Escribe aquí para buscar" placeholder="Escribe aquí para buscar" className="w-full min-w-0 bg-transparent text-[18px] outline-none placeholder:text-[#2f2f2f]" />
      </label>
      <button type="button" aria-label="Cortana" className="mr-1 flex w-[60px] items-center justify-center">
        <span className="h-5 w-5 rounded-full border-[3px] border-white" />
      </button>
      {APPS.map((a) => (
        <button key={a.name} type="button" aria-label={a.name} className={`relative flex w-[62px] items-center justify-center ${a.cell ?? ''}`}>
          {a.icon}
          {a.bar === 'full' && <span className="absolute inset-x-0 bottom-0 h-[3px] bg-[#76b0e6]" />}
          {a.bar === 'single' && <span className="absolute inset-x-[5px] bottom-0 h-[3px] bg-[#76b0e6]" />}
          {a.bar === 'stack' && <span className="absolute inset-x-[5px] bottom-0 h-[3px] border-r-[10px] border-[#56809f] bg-[#76b0e6]" />}
        </button>
      ))}

      <div className="ml-auto flex items-center">
        <svg viewBox="0 0 30 28" className="h-7 w-[30px]">
          <circle cx="14" cy="14" r="12.500" fill="#1a9bd7" stroke="#fff" strokeWidth="2" />
          <text x="13.500" y="20" textAnchor="middle" fontSize="18" fontWeight="700" fill="#fff">?</text>
          <circle cx="23.500" cy="20.500" r="6" fill="#1a9bd7" />
          <text x="23.500" y="24" textAnchor="middle" fontSize="10" fontWeight="700" fill="#fff">i</text>
        </svg>
        <svg viewBox="0 0 16 10" className="ml-3 h-[10px] w-4" fill="none" stroke="#fff" strokeWidth="1.400"><path d="m.6 9 7.400-7.600L15.400 9" /></svg>
        <svg viewBox="0 0 16 18" className="ml-[15px] h-[18px] w-4" fill="none" stroke="#fff" strokeWidth="1.300"><rect x="1" y="5" width="9.500" height="8.500" rx="1.500" /><path d="M10.500 8 14 6v7l-3.500-2M2.500 2.500q3.500-2.500 8 0M2.500 16q3.500 2.500 8 0" /></svg>
        <svg viewBox="0 0 21 14" className="ml-[11px] h-[14px] w-[21px]" fill="none" stroke="#fff" strokeWidth="1.200"><path d="M7 4h11.500v9H5.500V8.500" /><path d="M8 6h9v5.500H8z" fill="#fff" stroke="none" /><path d="M19 7v3.500M1 3h5v2q0 2-2.500 2T1 5zM2.300 0v3M4.700 0v3M3.500 7v4" /></svg>
        <svg viewBox="0 0 16 17" className="ml-[11px] h-[17px] w-4" fill="none" stroke="#9d9d9d" strokeWidth="1.300"><path d="M1 16Q1 2 15 1.500M4.500 16Q4.500 6 15 5.500" /><path d="M8 16q0-6.500 7-7M11.500 16q0-3 3.500-3.500" stroke="#fff" /><circle cx="14" cy="15" r="1.500" fill="#fff" stroke="none" /></svg>
        <svg viewBox="0 0 22 16" className="ml-[11px] h-4 w-[22px]" fill="none" stroke="#fff" strokeWidth="1.200"><path d="M1 5.500h3L8 1.500v13l-4-4H1zM11 5.500q2 2.500 0 5M14 3.500q3.500 4.500 0 9" /><path d="M17 1.500q5.500 6.500 0 13" stroke="#777" /></svg>
        <span className="ml-3 w-[30px] text-center text-[14px] leading-[22px]">ESP<br />LAA</span>
        <span className="ml-3 w-[74px] text-center text-[14px] leading-[22px] whitespace-nowrap">09:33<br />25/2/2021</span>
        <button type="button" aria-label="Notificaciones" className="relative mr-[5px] ml-5 flex h-full w-10 items-center">
          <svg viewBox="0 0 20 20" className="h-5 w-5"><path d="M0 0h20v17H9l-3 3v-3H0z" fill="#fff" /><path d="M4 5h12M4 8.500h12M4 12h8" stroke="#1d1d1d" strokeWidth="1.200" /></svg>
          <span className="absolute top-6 left-[10px] flex h-5 w-5 items-center justify-center rounded-full border border-[#8a8a8a] bg-[#2d2d2d] text-[14px] font-bold">9</span>
        </button>
        <span className="mr-[5px] h-full w-px bg-[#5c5c5c]" />
      </div>
    </footer>
  )
}

export default function App() {
  return (
    <div className="flex h-screen flex-col overflow-hidden bg-[#2f2f2f] font-['Open_Sans','Noto_Sans',sans-serif]">
      <MenuBar />
      <div className="flex min-h-0 flex-1">
        <Toolbar />
        <main className="flex min-w-0 flex-1 flex-col">
          <DocumentTabs />
          <div className="flex min-h-0 flex-1">
            <div className="relative flex-1 overflow-hidden bg-[#5f5f5f]">
              <div className="absolute top-[71px] left-[466px] h-[793px] w-[613px] border border-black bg-white" />
              <ActionsPanel />
            </div>
            <div className="flex w-5 flex-col items-center bg-[#4a4a4a] py-[5px] text-[#a0a0a0]">
              <Chevron dir="up" />
              <span className="my-auto h-[31px] w-[18px] rounded-full bg-[#606060]" />
              <Chevron dir="down" />
            </div>
          </div>
          <StatusBar />
        </main>
        <LayersPanel />
      </div>
      <Taskbar />
    </div>
  )
}
